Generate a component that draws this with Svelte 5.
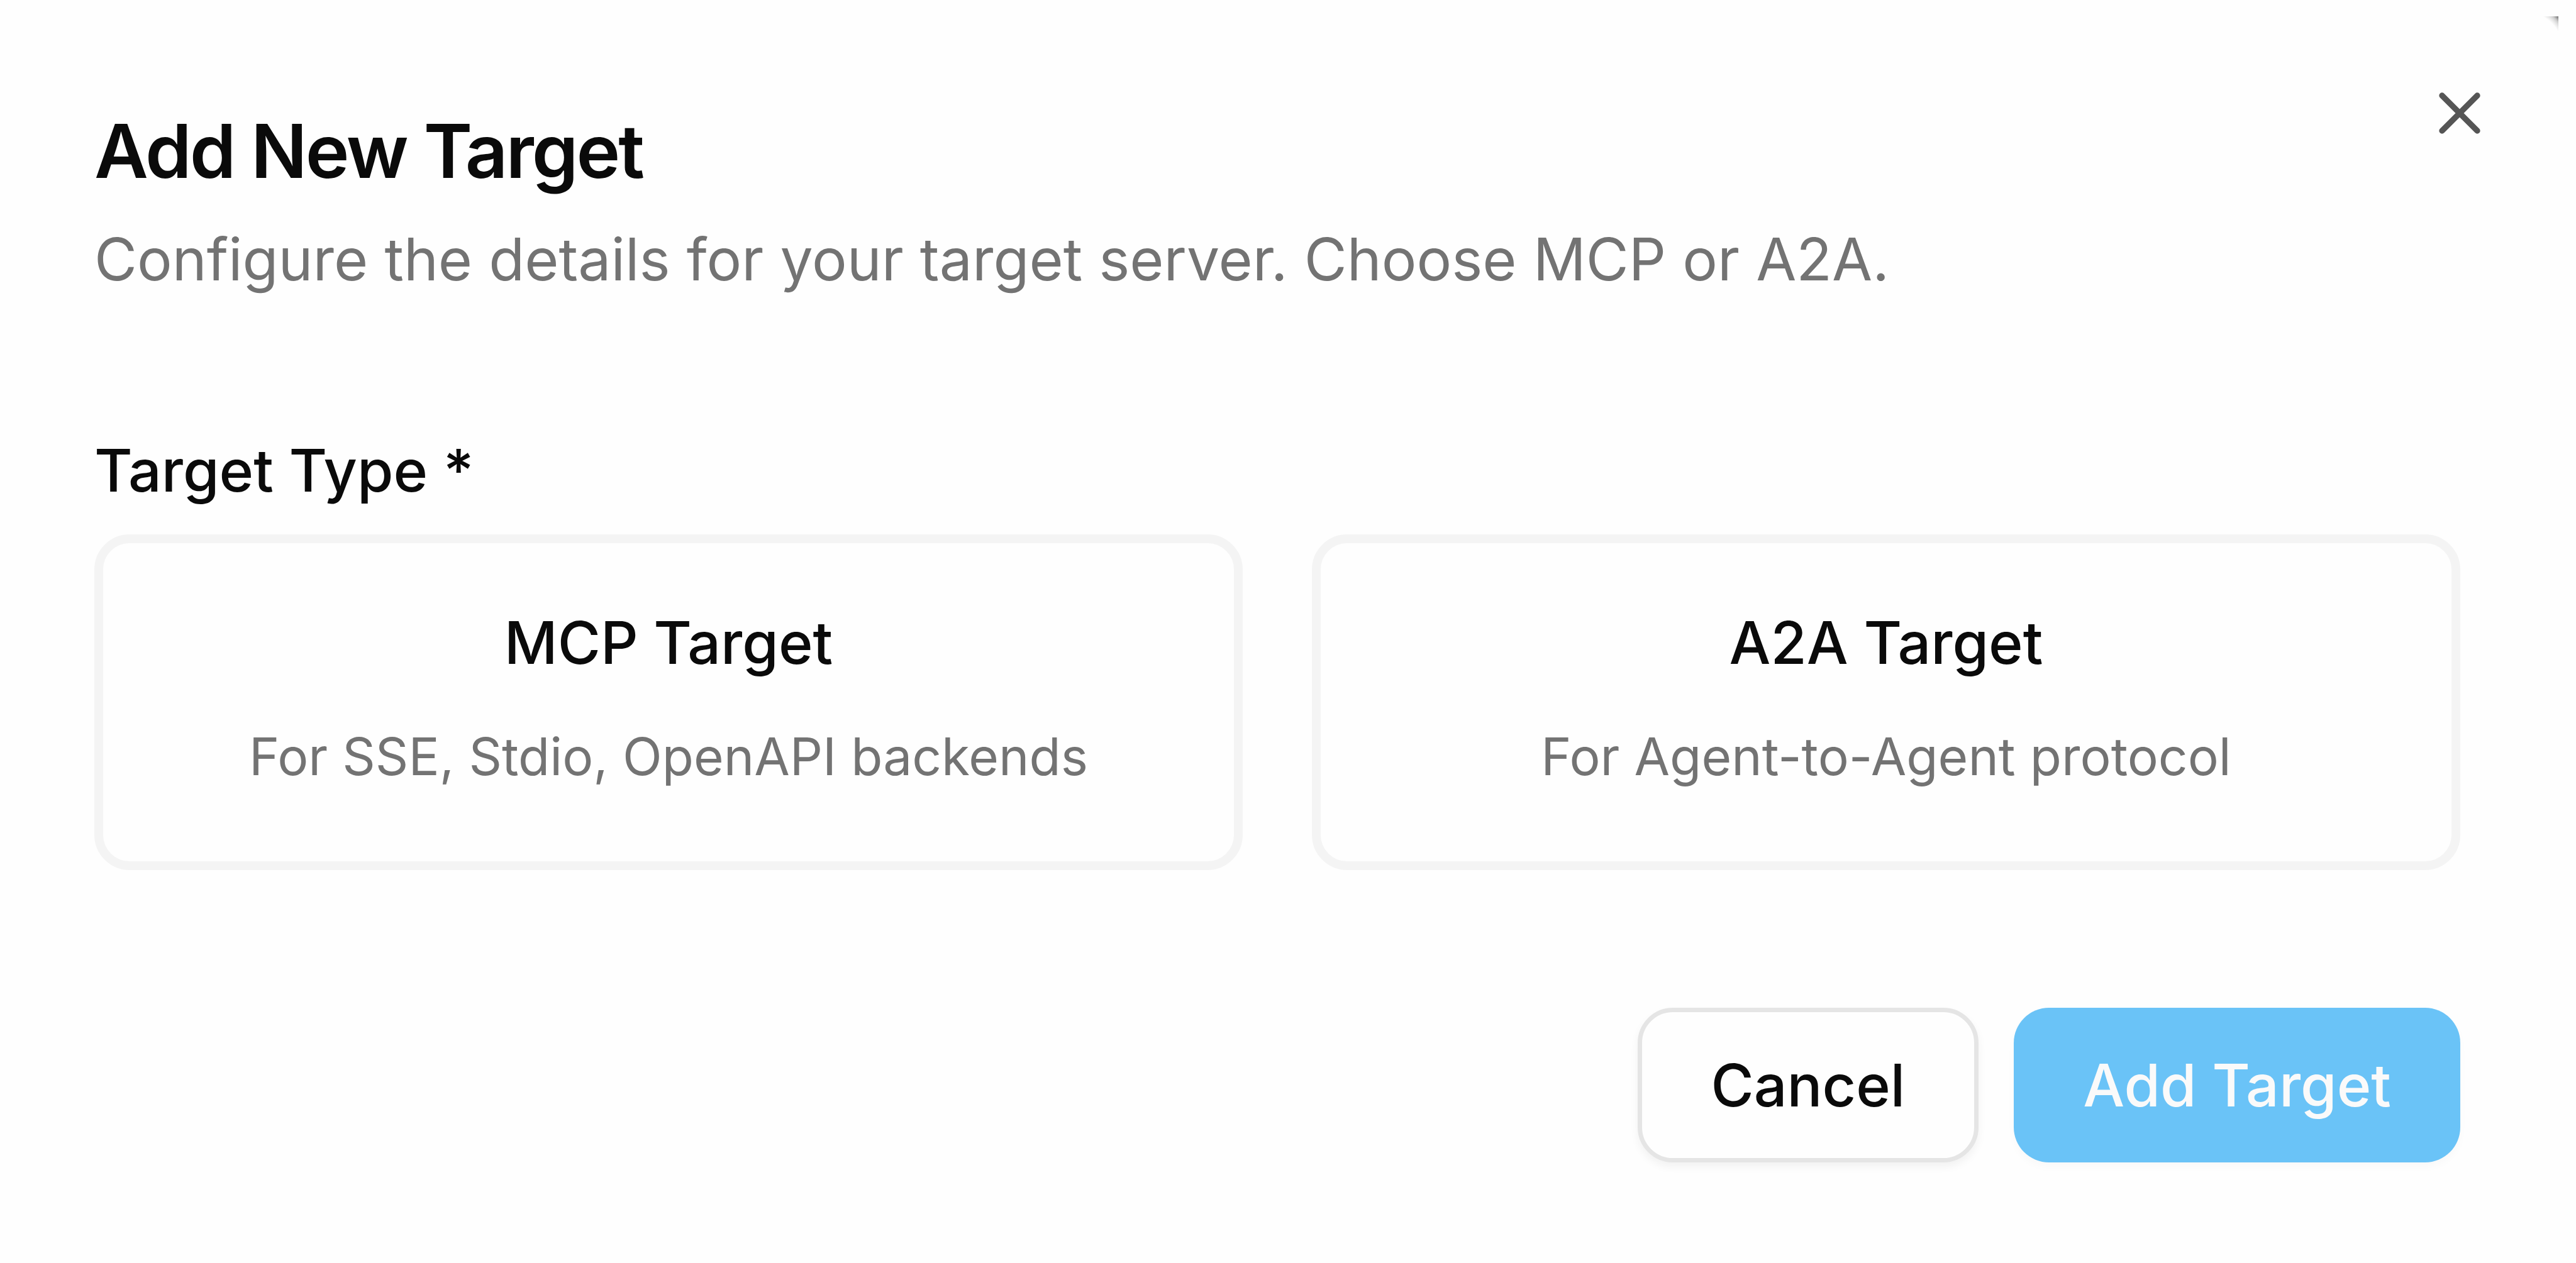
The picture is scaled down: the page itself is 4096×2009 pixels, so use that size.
<script>
  let selected = $state('');
  const types = [
    { id: 'mcp', title: 'MCP Target', text: 'For SSE, Stdio, OpenAPI backends' },
    { id: 'a2a', title: 'A2A Target', text: 'For Agent-to-Agent protocol' }
  ];
</script>

<main class="dialog" aria-labelledby="title">
  <div class="corner" aria-hidden="true"></div>
  <button class="close" aria-label="Close">
    <svg viewBox="0 0 24 24" fill="none" stroke="currentColor" stroke-width="2" stroke-linecap="round" stroke-linejoin="round"><path d="M18 6 6 18M6 6l12 12" /></svg>
  </button>

  <header>
    <h1 id="title">Add New Target</h1>
    <p class="lead">Configure the details for your target server. Choose MCP or A2A.</p>
  </header>

  <section aria-labelledby="type-label">
    <h2 id="type-label">Target Type *</h2>
    <div class="types">
      {#each types as type (type.id)}
        <button class="type" aria-pressed={selected === type.id} onclick={() => (selected = type.id)}>
          <span class="name">{type.title}</span>
          <span class="text">{type.text}</span>
        </button>
      {/each}
    </div>
  </section>

  <footer>
    <button class="action cancel">Cancel</button>
    <button class="action add">Add Target</button>
  </footer>
</main>

<style>
  :global(body) { background: #fefefe; }
  .dialog {
    position: relative;
    box-sizing: border-box;
    min-height: 100vh;
    padding: 176px 184px 160px 150px;
    font-family: Inter, "Liberation Sans", sans-serif;
    color: #0a0a0a;
  }
  button { font: inherit; color: inherit; cursor: pointer; }

  /* sliver of the backdrop behind the rounded dialog corner */
  .corner {
    position: absolute; top: 26px; right: 28px; width: 24px; height: 24px;
    background: radial-gradient(circle at -30px 54px, transparent 61px, #e6e6e6 66px, #cccccc 70px, #707070 76px);
  }
  .close {
    position: absolute; top: 124px; right: 129px;
    display: flex; padding: 0; border: 0; background: none; color: #555;
  }
  .close svg { width: 112px; height: 112px; }

  h1 { margin: 0; font-size: 118px; line-height: 128px; font-weight: 600; letter-spacing: -3px; }
  .lead { margin: 44px 0 0; font-size: 93px; line-height: 128px; color: #737373; }
  section { margin-top: 208px; }
  h2 { margin: 0; font-size: 93px; line-height: 128px; font-weight: 500; }
  .types { display: grid; grid-template-columns: 1fr 1fr; gap: 110px; margin-top: 38px; }
  .type {
    display: flex; flex-direction: column; align-items: center; gap: 62px;
    padding: 94px 40px 110px;
    border: 14px solid #f4f4f4; border-radius: 56px; background: #fefefe;
  }
  .name { font-size: 93px; line-height: 128px; font-weight: 500; }
  .text { font-size: 82px; line-height: 112px; color: #737373; }
  footer { display: flex; justify-content: flex-end; gap: 56px; margin-top: 219px; }
  .action {
    box-sizing: border-box; height: 246px; padding: 0 110px;
    border: 0; border-radius: 56px; font-size: 93px; font-weight: 500;
  }
  .cancel { border: 7px solid #e5e5e5; background: #fefefe; box-shadow: 0 7px 14px #0000000d; }
  .add { background: #6ac3f7; color: #fafafa; box-shadow: 0 7px 14px #00000006; }
</style>
